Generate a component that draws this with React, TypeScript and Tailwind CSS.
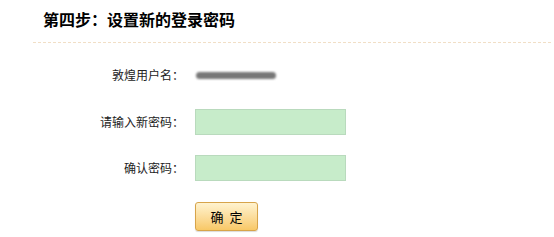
import React from "react";

export default function App() {
  return (
    <div
      className="w-[554px] h-[237px] bg-white text-black overflow-hidden"
      style={{ fontFamily: '"Noto Sans CJK SC", "Liberation Sans", sans-serif' }}
    >
      <div className="pl-[43px] pt-[9px] h-[42px] text-[16px] font-bold leading-[20px]">
        第四步：设置新的登录密码
      </div>
      <div className="ml-[33px] mr-[3px] border-t border-dashed border-[#f1dfc6]" />
      <div className="flex flex-col pt-[24px] text-[12px] text-[#222]">
        <div className="flex items-center h-[16px]">
          <div className="w-[184px] text-right">敦煌用户名：</div>
          <div className="ml-[12px] w-[80px] h-[7px] rounded-full bg-[#777] blur-[1px]" />
        </div>
        <div className="flex items-center mt-[26px] h-[26px]">
          <div className="w-[184px] text-right">请输入新密码：</div>
          <input
            type="password"
            className="ml-[11px] w-[151px] h-[26px] bg-[#c7ecca] border border-[#b9dabd] outline-none"
          />
        </div>
        <div className="flex items-center mt-[20px] h-[26px]">
          <div className="w-[184px] text-right">确认密码：</div>
          <input
            type="password"
            className="ml-[11px] w-[151px] h-[26px] bg-[#c7ecca] border border-[#b9dabd] outline-none"
          />
        </div>
        <div className="flex mt-[21px] pl-[195px]">
          <button className="flex items-center justify-center gap-[6px] w-[63px] h-[29px] rounded-[3px] border border-[#d7a44a] bg-gradient-to-b from-[#fff3cf] to-[#f8c866] text-[13px] text-black shadow-[0_1px_1px_rgba(0,0,0,0.15)]">
            <span>确</span>
            <span>定</span>
          </button>
        </div>
      </div>
    </div>
  );
}
